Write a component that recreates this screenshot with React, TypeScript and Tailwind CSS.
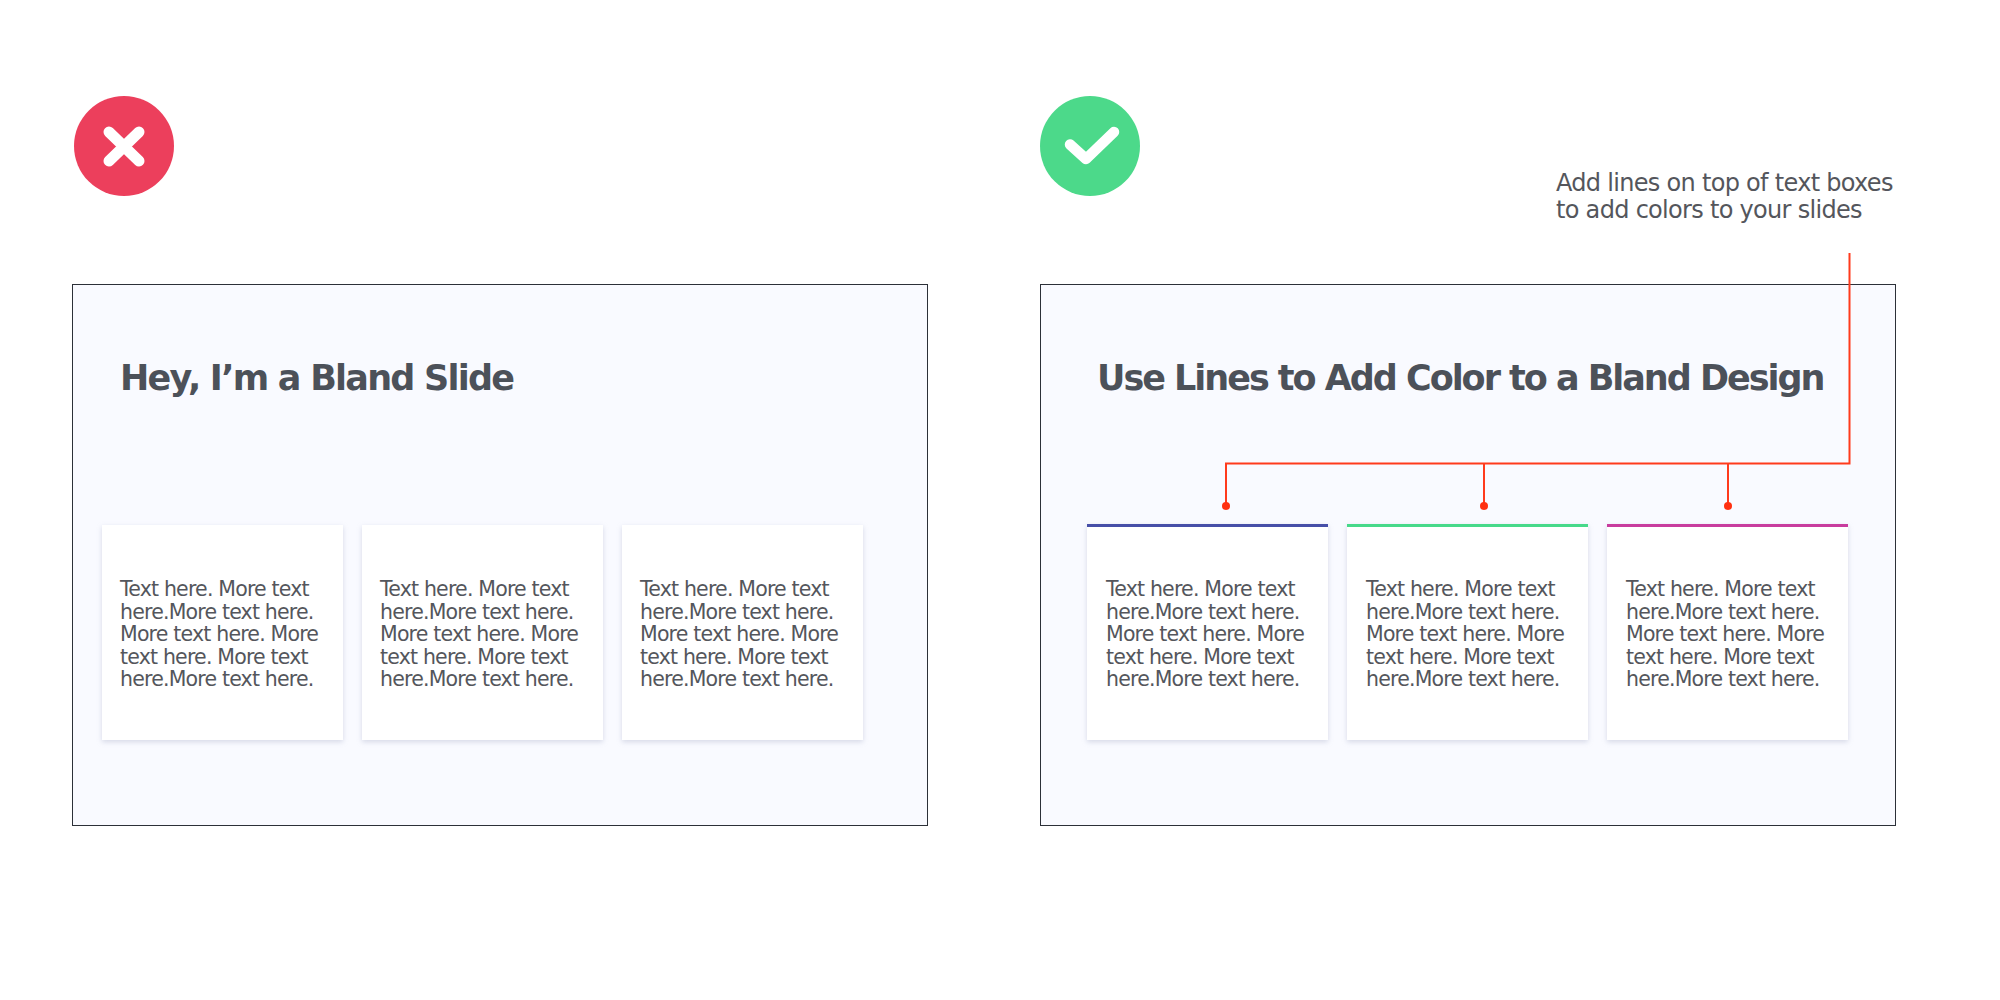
const lines = ["Text here. More text", "here.More text here.", "More text here. More", "text here. More text", "here.More text here."];

function Card({ bar }: { bar?: string }) {
  return (
    <div className={`relative w-[241px] bg-white shadow-[0_2px_5px_rgba(150,155,185,0.35)] ${bar ?? "h-[215px] pt-[53px] pl-[18px]"}`}>
      <p className="font-['DejaVu_Sans',sans-serif] text-[20.5px] leading-[22.6px] tracking-[-0.81px] text-[#54565c] whitespace-nowrap">
        {lines.map((l) => (
          <span key={l} className="block">{l}</span>
        ))}
      </p>
    </div>
  );
}

function Slide({ title, titleClass, rowClass, bars }: { title: string; titleClass: string; rowClass: string; bars?: string[] }) {
  return (
    <div className="relative h-[542px] border border-[#2c3038] bg-[#f9faff]">
      <h2 className={`h-[40px] mt-[73px] font-['DejaVu_Sans',sans-serif] font-bold text-[35px] leading-[40px] text-[#4c5159] whitespace-nowrap ${titleClass}`}>
        {title}
      </h2>
      <div className={`flex gap-[19px] mt-[127px] ${rowClass}`}>
        {[0, 1, 2].map((i) => (
          <Card key={i} bar={bars?.[i]} />
        ))}
      </div>
    </div>
  );
}

export default function App() {
  return (
    <div className="relative w-[2000px] h-[1000px] bg-white overflow-hidden flex gap-[112px] pl-[72px] pt-[96px]">
      <div className="w-[856px] flex flex-col">
        <div className="h-[188px] pl-[2px]">
          <svg width="100" height="100" viewBox="0 0 100 100">
            <circle cx="50" cy="50" r="50" fill="#ec3f5c" />
            <path d="M35 36 L65 65 M65 36 L35 65" stroke="#fff" strokeWidth="11" strokeLinecap="round" fill="none" />
          </svg>
        </div>
        <Slide title="Hey, I’m a Bland Slide" titleClass="pl-[47px] tracking-[-1.75px]" rowClass="pl-[29px]" />
      </div>
      <div className="w-[856px] flex flex-col">
        <div className="h-[188px] flex justify-between">
          <svg width="100" height="100" viewBox="0 0 100 100">
            <circle cx="50" cy="50" r="50" fill="#4cd98a" />
            <path d="M30 48.5 L46 63 L74 36" stroke="#fff" strokeWidth="10.5" strokeLinecap="round" strokeLinejoin="round" fill="none" />
          </svg>
          <p className="w-[340px] mt-[74px] font-['DejaVu_Sans',sans-serif] text-[24px] leading-[27px] tracking-[-0.7px] text-[#54565c] whitespace-nowrap">
            <span className="block">Add lines on top of text boxes</span>
            <span className="block">to add colors to your slides</span>
          </p>
        </div>
        <Slide
          title="Use Lines to Add Color to a Bland Design"
          titleClass="pl-[56px] tracking-[-2.03px]"
          rowClass="pl-[46px]"
          bars={[
            "border-t-[3px] border-[#474fa8] -mt-[1px] h-[216px] pt-[51px] pl-[19px]",
            "border-t-[3px] border-[#47d98a] -mt-[1px] h-[216px] pt-[51px] pl-[19px]",
            "border-t-[3px] border-[#c83c9e] -mt-[1px] h-[216px] pt-[51px] pl-[19px]",
          ]}
        />
      </div>
      <svg className="absolute left-0 top-0 pointer-events-none" width="2000" height="1000" viewBox="0 0 2000 1000">
        <path d="M1849.5 253 V463.5 H1225 M1226 463.5 V506 M1484 463.5 V506 M1728 463.5 V506" stroke="#ff3a1c" strokeWidth="2" fill="none" />
        <circle cx="1226" cy="506" r="4" fill="#ff3010" />
        <circle cx="1484" cy="506" r="4" fill="#ff3010" />
        <circle cx="1728" cy="506" r="4" fill="#ff3010" />
      </svg>
    </div>
  );
}
